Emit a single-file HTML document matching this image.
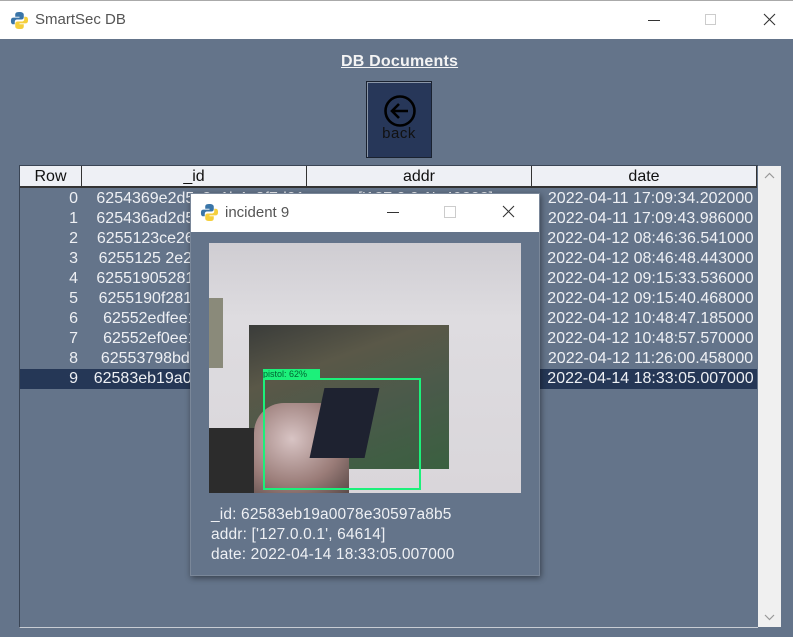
<!DOCTYPE html>
<html><head><meta charset="utf-8"><style>
*{margin:0;padding:0;box-sizing:border-box}
body{width:793px;height:637px;overflow:hidden;background:#64748a;font-family:"Liberation Sans",Arial,sans-serif;position:relative}
.tb{position:absolute;left:0;top:0;width:793px;height:39px;background:#fff;border-top:1px solid #aaa}
.tt{position:absolute;font-size:15px;color:#555}
.ctl{position:absolute;color:#333}
.title{position:absolute;left:341px;top:53px;font-size:16px;font-weight:bold;color:#f4f4f4;text-decoration:underline;letter-spacing:0.2px}
.back{position:absolute;left:366px;top:81px;width:66px;height:77px;background:#273759;border:1px solid #1a2230;box-shadow:inset 1px 1px 0 #8a96a8}
.tbl{position:absolute;left:19px;top:165px;width:739px;height:463px;border-left:1px solid #3a4555;border-top:1px solid #3a4555;border-bottom:1px solid #c8cdd4}
.hd{position:absolute;top:166px;height:22px;background:#eef0f5;border-right:1.5px solid #333;border-bottom:2px solid #333;font-size:16px;color:#111;text-align:center;line-height:22px}
.row{position:absolute;left:20px;width:737px;height:20px;font-size:16px;color:#eef0f4;line-height:20px}
.row span{position:absolute;top:0;text-align:center}
.sel{background:#253756}
.sb{position:absolute;left:758px;top:166px;width:23px;height:461px;background:#f0f0f0}
.pop{position:absolute;left:190px;top:193px;width:350px;height:383px;background:#64748a;box-shadow:1px 2px 6px rgba(0,0,0,.45);border:1px solid #7a8799}
.ptb{position:absolute;left:0;top:0;width:348px;height:38px;background:#fff}
.img{position:absolute;left:18px;top:49px;width:312px;height:250px;overflow:hidden;background:linear-gradient(#cfcdd2,#dedce0 30%,#d9d6da)}
.info{position:absolute;left:20px;top:311px;font-size:15.5px;color:#eef0f4;line-height:20px;letter-spacing:0.15px}
</style></head><body>
<div class="tb">
<svg style="position:absolute;left:10px;top:10px" width="19" height="19" viewBox="0 0 20 20"><path d="M9.5 1C6 1 5.5 2.5 5.5 4v2h4.5v1H3.5C1.5 7 1 8.5 1 10.5S1.5 14 3.5 14H5v-2.5C5 10 6 9 7.5 9h4.5C13.5 9 14.5 8 14.5 6.5V4C14.5 2 13 1 9.5 1z" fill="#3a75a8"/><path d="M10.5 19c3.5 0 4-1.5 4-3v-2H10v-1h6.5c2 0 2.5-1.5 2.5-3.5S18.5 6 16.5 6H15v2.5C15 10 14 11 12.5 11H8C6.5 11 5.5 12 5.5 13.5V16c0 2 1.5 3 5 3z" fill="#f5cf3c"/></svg>
<div class="tt" style="left:35px;top:10px">SmartSec DB</div>
<div class="ctl" style="left:648px;top:19px;width:12px;height:1px;background:#333"></div>
<div class="ctl" style="left:705px;top:13px;width:11px;height:11px;border:1px solid #ccc"></div>
<svg class="ctl" style="left:763px;top:12px" width="13" height="13"><path d="M1 1L12 12M12 1L1 12" stroke="#333" stroke-width="1.1"/></svg>
</div>
<div class="title">DB Documents</div>
<div class="back">
<svg style="position:absolute;left:16px;top:12px" width="34" height="34" viewBox="0 0 34 34"><circle cx="17" cy="17" r="14.5" fill="none" stroke="#000" stroke-width="2.6"/><path d="M25 17H10M16 10l-7 7 7 7" fill="none" stroke="#000" stroke-width="2.6"/></svg>
<div style="position:absolute;left:0;width:64px;text-align:center;top:43px;font-size:15px;color:#111;letter-spacing:.5px">back</div>
</div>
<div class="tbl"></div>
<div class="hd" style="left:20px;width:62px">Row</div>
<div class="hd" style="left:82px;width:225px">_id</div>
<div class="hd" style="left:307px;width:225px">addr</div>
<div class="hd" style="left:532px;width:225px">date</div>
<div class="row" style="top:189px"><span style="left:0;width:58px;text-align:right">0</span><span style="left:68px;width:225px">6254369e2d5c2a1b4e8f7d01</span><span style="left:293px;width:225px">['127.0.0.1', 49202]</span><span style="left:518px;width:225px">2022-04-11 17:09:34.202000</span></div>
<div class="row" style="top:209px"><span style="left:0;width:58px;text-align:right">1</span><span style="left:68px;width:225px">625436ad2d5c2a1b4e8f7d02</span><span style="left:293px;width:225px">['127.0.0.1', 49206]</span><span style="left:518px;width:225px">2022-04-11 17:09:43.986000</span></div>
<div class="row" style="top:229px"><span style="left:0;width:58px;text-align:right">2</span><span style="left:68px;width:225px">6255123ce26f1a0b3c4d5e01</span><span style="left:293px;width:225px">['127.0.0.1', 50112]</span><span style="left:518px;width:225px">2022-04-12 08:46:36.541000</span></div>
<div class="row" style="top:249px"><span style="left:0;width:58px;text-align:right">3</span><span style="left:68px;width:225px">6255125 2e26f1a0b3c4d5e0</span><span style="left:293px;width:225px">['127.0.0.1', 50118]</span><span style="left:518px;width:225px">2022-04-12 08:46:48.443000</span></div>
<div class="row" style="top:269px"><span style="left:0;width:58px;text-align:right">4</span><span style="left:68px;width:225px">625519052815a3b2c1d0e9f8</span><span style="left:293px;width:225px">['127.0.0.1', 50230]</span><span style="left:518px;width:225px">2022-04-12 09:15:33.536000</span></div>
<div class="row" style="top:289px"><span style="left:0;width:58px;text-align:right">5</span><span style="left:68px;width:225px">6255190f2815a3b2c1d0e9f9</span><span style="left:293px;width:225px">['127.0.0.1', 50236]</span><span style="left:518px;width:225px">2022-04-12 09:15:40.468000</span></div>
<div class="row" style="top:309px"><span style="left:0;width:58px;text-align:right">6</span><span style="left:68px;width:225px">62552edfee1a2b3c4d5e6f7</span><span style="left:293px;width:225px">['127.0.0.1', 51002]</span><span style="left:518px;width:225px">2022-04-12 10:48:47.185000</span></div>
<div class="row" style="top:329px"><span style="left:0;width:58px;text-align:right">7</span><span style="left:68px;width:225px">62552ef0ee1a2b3c4d5e6f8</span><span style="left:293px;width:225px">['127.0.0.1', 51008]</span><span style="left:518px;width:225px">2022-04-12 10:48:57.570000</span></div>
<div class="row" style="top:349px"><span style="left:0;width:58px;text-align:right">8</span><span style="left:68px;width:225px">62553798bd1a2b3c4d5e6f9</span><span style="left:293px;width:225px">['127.0.0.1', 51440]</span><span style="left:518px;width:225px">2022-04-12 11:26:00.458000</span></div>
<div class="row sel" style="top:369px"><span style="left:0;width:58px;text-align:right">9</span><span style="left:68px;width:225px">62583eb19a0078e30597a8b5</span><span style="left:293px;width:225px">['127.0.0.1', 64614]</span><span style="left:518px;width:225px">2022-04-14 18:33:05.007000</span></div>
<div class="sb">
<svg style="position:absolute;left:6px;top:6px" width="11" height="7"><path d="M1 6L5.5 1.5 10 6" fill="none" stroke="#999" stroke-width="1.2"/></svg>
<svg style="position:absolute;left:6px;top:448px" width="11" height="7"><path d="M1 1L5.5 5.5 10 1" fill="none" stroke="#999" stroke-width="1.2"/></svg>
</div>
<div class="pop">
<div class="ptb">
<svg style="position:absolute;left:9px;top:9px" width="19" height="19" viewBox="0 0 20 20"><path d="M9.5 1C6 1 5.5 2.5 5.5 4v2h4.5v1H3.5C1.5 7 1 8.5 1 10.5S1.5 14 3.5 14H5v-2.5C5 10 6 9 7.5 9h4.5C13.5 9 14.5 8 14.5 6.5V4C14.5 2 13 1 9.5 1z" fill="#3a75a8"/><path d="M10.5 19c3.5 0 4-1.5 4-3v-2H10v-1h6.5c2 0 2.5-1.5 2.5-3.5S18.5 6 16.5 6H15v2.5C15 10 14 11 12.5 11H8C6.5 11 5.5 12 5.5 13.5V16c0 2 1.5 3 5 3z" fill="#f5cf3c"/></svg>
<div class="tt" style="left:34px;top:10px">incident 9</div>
<div class="ctl" style="left:196px;top:18px;width:12px;height:1px;background:#333"></div>
<div class="ctl" style="left:253px;top:12px;width:12px;height:12px;border:1px solid #ccc"></div>
<svg class="ctl" style="left:311px;top:11px" width="13" height="13"><path d="M1 1L12 12M12 1L1 12" stroke="#333" stroke-width="1.1"/></svg>
</div>
<div class="img">
<div style="position:absolute;left:0;top:55px;width:14px;height:70px;background:#8a8a7a"></div>
<div style="position:absolute;left:40px;top:82px;width:200px;height:144px;background:linear-gradient(160deg,#3a3c3a 0%,#5a5848 30%,#4a5a4a 60%,#3a6040 100%)"></div>
<div style="position:absolute;left:0;top:185px;width:60px;height:65px;background:#2c2c2c"></div>
<div style="position:absolute;left:45px;top:160px;width:95px;height:90px;background:radial-gradient(ellipse at 40% 40%,#d8c4c4,#9a7c78 60%,#5a4a48);border-radius:30px 30px 0 0"></div>
<div style="position:absolute;left:108px;top:145px;width:55px;height:70px;background:#1e2230;transform:skewX(-12deg)"></div>
<div style="position:absolute;left:54px;top:126px;width:57px;height:10px;background:#1cf07a;font-size:9px;line-height:10px;color:#063">pistol: 62%</div>
<div style="position:absolute;left:54px;top:135px;width:158px;height:112px;border:2px solid #1cf07a"></div>
</div>
<div class="info">_id: 62583eb19a0078e30597a8b5<br>addr: ['127.0.0.1', 64614]<br>date: 2022-04-14 18:33:05.007000</div>
</div>
</body></html>
